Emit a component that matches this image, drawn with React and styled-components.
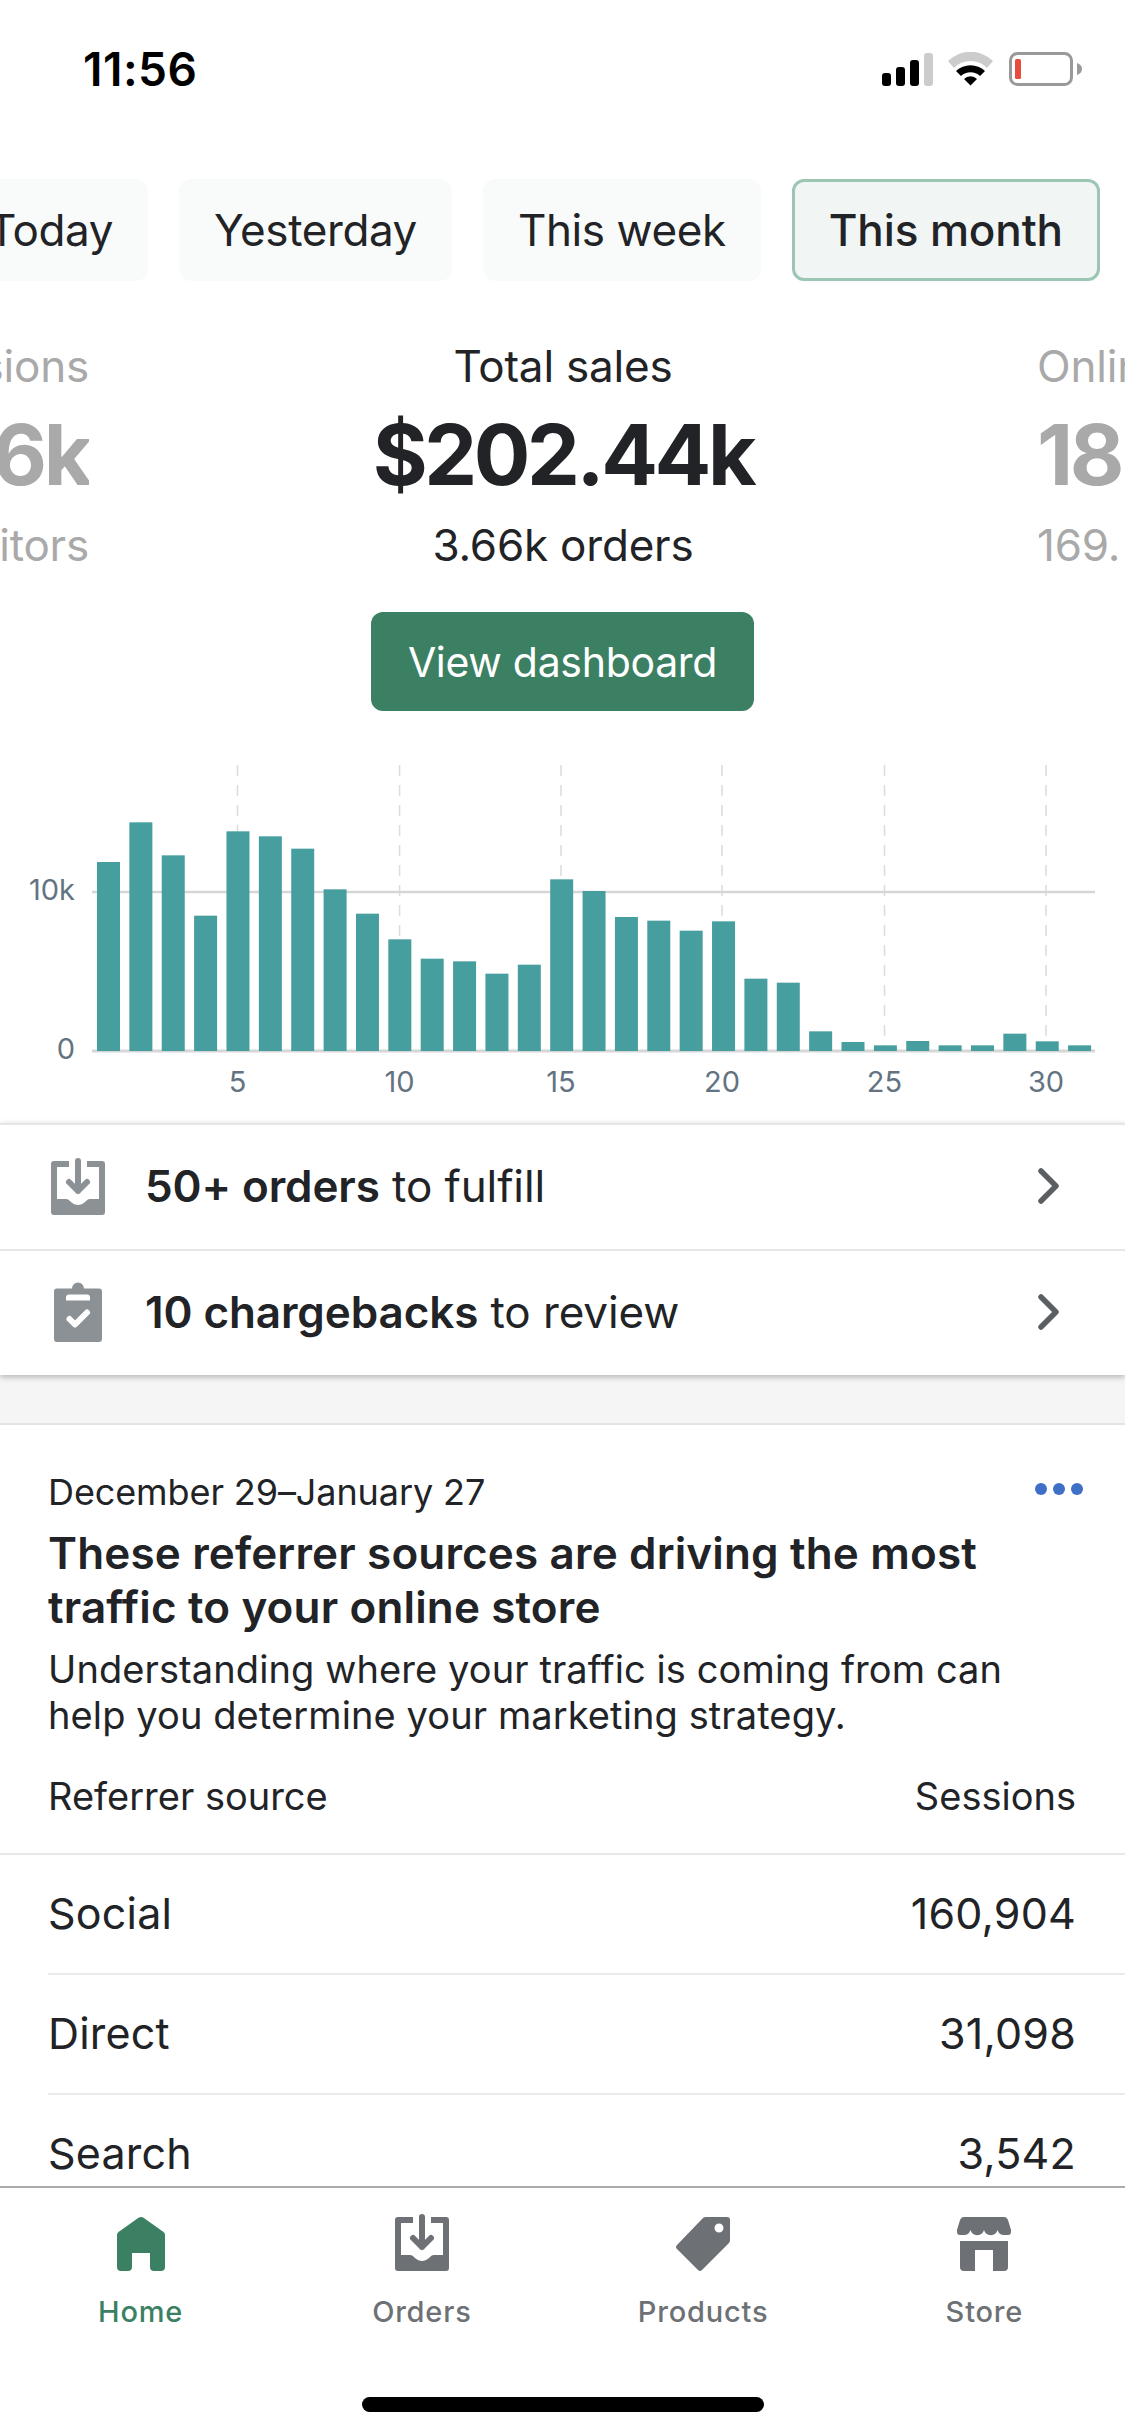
import React from "react";
import styled, { createGlobalStyle } from "styled-components";

const Global = createGlobalStyle`
  html, body { margin: 0; padding: 0; background: #fff; }
  * { box-sizing: border-box; }
`;

const Phone = styled.div`
  width: 1125px; height: 2436px; display: flex; flex-direction: column; overflow: hidden;
  background: #fff; color: #212326; font-family: Inter, "Noto Sans", sans-serif;
`;
const Main = styled.main`flex: 1; min-height: 0; overflow: hidden;`;
const StatusBar = styled.div`
  height: 138px; display: flex; align-items: center; justify-content: space-between;
  padding: 0 43px 0 83px;
`;
const Time = styled.div`font-size: 46px; font-weight: 600; color: #000; letter-spacing: 0.5px;`;
const StatusIcons = styled.div`display: flex; align-items: center;`;
const PillRow = styled.div`
  margin-top: 41px; display: flex; justify-content: flex-end; gap: 31px; padding-right: 25px; overflow: hidden;
`;
const Pill = styled.div`
  flex: none; height: 102px; padding: 0 ${p => (p.$active ? 34 : 35)}px; display: flex; align-items: center; border-radius: 12px;
  font-size: 44px; letter-spacing: ${p => (p.$active ? "-0.1px" : "-0.4px")}; color: #212326;
  background: ${p => (p.$active ? "#f1f5f4" : "#f9fbfa")};
  border: ${p => (p.$active ? "3px solid #9cc6b3" : "none")};
  font-weight: ${p => (p.$active ? 500 : 400)};
`;
const Metrics = styled.div`margin-top: 57px; display: flex; overflow: hidden;`;
const SideMetric = styled.div`
  flex: none; width: ${p => p.$w}px; overflow: hidden; white-space: nowrap; color: #a9a9a9;
  display: flex; flex-direction: column; align-items: ${p => (p.$left ? "flex-end" : "flex-start")};
`;
const CenterMetric = styled.div`flex: 1; display: flex; flex-direction: column; align-items: center; white-space: nowrap;`;
const Label = styled.div`font-size: 44px; line-height: 56px; letter-spacing: -0.2px;`;
const Value = styled.div`font-size: 84px; line-height: 122px; font-weight: 700; letter-spacing: -3.4px;`;
const Sub = styled.div`font-size: 44px; line-height: 58px; letter-spacing: -0.2px;`;
const ButtonWrap = styled.div`margin-top: 38px; display: flex; justify-content: center;`;
const Button = styled.div`
  width: 383px; height: 99px; border-radius: 12px; background: #3b8062; color: #fff;
  display: flex; align-items: center; justify-content: center; font-size: 41px; letter-spacing: -0.3px;
`;
const ChartSvg = styled.svg`display: block; margin-top: 54px;`;
const Rows = styled.div`box-shadow: 0 2px 6px rgba(0,0,0,.28); position: relative;`;
const TaskRow = styled.div`
  height: 126px; border-top: 2px solid #e6e6e6; display: flex; align-items: center;
  padding: 0 66px 2px 51px; font-size: 44px; letter-spacing: -0.1px;
`;
const TaskIcon = styled.div`width: 54px; display: flex; justify-content: center; margin-right: 40px;`;
const TaskText = styled.div`flex: 1; b { font-weight: 600; }`;
const Gap = styled.div`height: 50px; background: #f5f5f5; border-bottom: 2px solid #e4e4e4;`;
const Card = styled.section`padding-top: 44px;`;
const CardTop = styled.div`display: flex; justify-content: space-between; align-items: flex-start; padding: 0 42px 0 48px;`;
const DateLine = styled.div`font-size: 36px; line-height: 46px; letter-spacing: -0.1px;`;
const Dots = styled.div`display: flex; gap: 6px; margin-top: 14px;`;
const Dot = styled.span`width: 12px; height: 12px; border-radius: 50%; background: #3f6fc7;`;
const Heading = styled.h2`
  margin: 11px 0 0; padding: 0 48px; font-size: 44px; line-height: 54px; font-weight: 600; letter-spacing: 0.15px; width: 1060px;
`;
const Desc = styled.p`margin: 13px 0 0; padding: 0 48px; font-size: 38px; line-height: 45.5px; letter-spacing: 0.1px; width: 1075px;`;
const TableHead = styled.div`
  margin-top: 35px; padding: 0 49px 34px 48px; display: flex; justify-content: space-between;
  font-size: 38px; line-height: 46px; border-bottom: 2px solid #e8e8e8;
`;
const TableRow = styled.div`
  margin-left: 48px; height: 120px; padding: 0 49px 2px 0; display: flex; align-items: center; justify-content: space-between;
  font-size: 43px; letter-spacing: 0.2px; border-bottom: 2px solid #ebebeb;
`;
const Nav = styled.nav`flex: none; height: 250px; border-top: 2px solid #aaa; background: #fff; display: flex; flex-direction: column;`;
const NavGrid = styled.div`display: grid; grid-template-columns: repeat(4, 1fr); padding-top: 29px;`;
const NavItem = styled.div`
  display: flex; flex-direction: column; align-items: center;
  color: ${p => (p.$active ? "#3b8062" : "#6d7175")};
`;
const NavIconBox = styled.div`height: 54px; display: flex; align-items: flex-end;`;
const NavLabel = styled.div`margin-top: 21px; font-size: 29px; line-height: 40px; font-weight: 500; letter-spacing: 0.8px;`;
const HomeBar = styled.div`margin: 65px auto 0; width: 402px; height: 15px; border-radius: 8px; background: #000;`;

const Signal = () => (
  <svg width="51" height="33" viewBox="0 0 51 33" style={{ marginRight: 15 }}>
    <rect x="0" y="20" width="9" height="13" rx="3" fill="#000" />
    <rect x="14" y="14" width="9" height="19" rx="3" fill="#000" />
    <rect x="28" y="7" width="9" height="26" rx="3" fill="#000" />
    <rect x="42" y="0" width="9" height="33" rx="3" fill="#ccc" />
  </svg>
);
const Wifi = () => (
  <svg width="45" height="34" viewBox="0 0 45 34" style={{ marginRight: 16 }}>
    <path d="M0 9A32 32 0 0 1 45 9L39 16A23 23 0 0 0 6 16Z" fill="#ccc" />
    <path d="M8 19A21 21 0 0 1 37 19L32 24A14 14 0 0 0 13 24Z" fill="#000" />
    <path d="M16 27A9 9 0 0 1 29 27L22.5 33.5Z" fill="#000" />
  </svg>
);
const Battery = () => (
  <svg width="73" height="34" viewBox="0 0 73 34">
    <rect x="1.5" y="1.5" width="61" height="31" rx="7" fill="none" stroke="#999" strokeWidth="3" />
    <rect x="6" y="7" width="6" height="20" rx="1.5" fill="#e74c3c" />
    <path d="M68 11C71 12 73 14 73 17C73 20 71 22 68 23Z" fill="#999" />
  </svg>
);

const OrdersIcon = ({ color = "currentColor" }) => (
  <svg width="54" height="57" viewBox="0 0 54 57" style={{ overflow: "visible", display: "block" }}>
    <path fill={color} d="M3 3H18V9H6V41H15C17 41 18 42 20 44C22 46 25 47 27 47C29 47 32 46 34 44C36 42 37 41 39 41H48V9H36V3H51A3 3 0 0 1 54 6V54A3 3 0 0 1 51 57H3A3 3 0 0 1 0 54V6A3 3 0 0 1 3 3Z" />
    <path d="M27 3V33M18 24L27 33L36 24" fill="none" stroke={color} strokeWidth="6" strokeLinecap="round" strokeLinejoin="round" />
  </svg>
);
const ClipboardIcon = () => (
  <svg width="48" height="60" viewBox="0 0 48 60" style={{ display: "block" }}>
    <path fillRule="evenodd" fill="#8c9196" d="M18 6.5A6 6 0 0 1 30 6.5H45A3 3 0 0 1 48 9.5V57A3 3 0 0 1 45 60H3A3 3 0 0 1 0 57V9.5A3 3 0 0 1 3 6.5ZM15 12.5A3 3 0 0 0 12 15.5V18.5H36V15.5A3 3 0 0 0 33 12.5Z" />
    <path d="M15.5 37L21 42.5L33 30.5" fill="none" stroke="#fff" strokeWidth="6" strokeLinecap="round" strokeLinejoin="round" />
  </svg>
);
const HomeIcon = () => (
  <svg width="48" height="54" viewBox="0 0 48 54" style={{ display: "block" }}>
    <path fill="currentColor" d="M21.5 .7Q24 -.5 26.5 .7L46.5 15Q48 16 48 18V50A4 4 0 0 1 44 54H37A4 4 0 0 1 33 50V36H15V50A4 4 0 0 1 11 54H4A4 4 0 0 1 0 50V18Q0 16 1.5 15Z" />
  </svg>
);
const TagIcon = () => (
  <svg width="54" height="54" viewBox="0 0 54 54" style={{ display: "block" }}>
    <path fillRule="evenodd" fill="currentColor" d="M27 1Q28 0 30 0H51A3 3 0 0 1 54 3V23Q54 25 53 26L26 53Q24 55 22 53L1 32Q-1 30 1 28ZM43 6.5A4.5 4.5 0 1 0 43 15.5A4.5 4.5 0 1 0 43 6.5Z" />
  </svg>
);
const StoreIcon = () => (
  <svg width="54" height="54" viewBox="0 0 54 54" style={{ display: "block" }}>
    <path fill="currentColor" d="M7 0H47C49 0 50 1 51 3L54 13V15A3 3 0 0 1 51 18H47A7 7 0 0 1 40.5 13A7 7 0 0 1 27 13A7 7 0 0 1 13.5 13A7 7 0 0 1 7 18H3A3 3 0 0 1 0 15V13L3 3C4 1 5 0 7 0Z" />
    <path fill="currentColor" d="M3 24H51V50A4 4 0 0 1 47 54H36V33H18V54H7A4 4 0 0 1 3 50Z" />
  </svg>
);
const Chevron = () => (
  <svg width="21" height="36" viewBox="0 0 21 36">
    <path d="M3 3L18 18L3 33" fill="none" stroke="#5c5f62" strokeWidth="5.5" strokeLinecap="round" strokeLinejoin="round" />
  </svg>
);

const tops = [365,246,345,526,273,288,325,447,520,597,655,663,700,673,417,452,530,541,571,543,715,727,873,905,915,902,915,915,880,903,915];
const BASE = 286;
const Chart = () => (
  <ChartSvg width="1125" height="358" viewBox="0 0 1125 358" fontFamily="Inter, sans-serif" fontSize="29" fill="#637381">
    {[237.5, 399.6, 561, 722, 884.5, 1046].map(x => (
      <line key={x} x1={x} x2={x} y1="0" y2={BASE} stroke="#dcdcdc" strokeWidth="1.5" strokeDasharray="11 9" />
    ))}
    <line x1="92" x2="1095" y1="127" y2="127" stroke="#d6d6d8" strokeWidth="2.5" />
    <line x1="92" x2="1095" y1={BASE} y2={BASE} stroke="#d6d6d8" strokeWidth="3" />
    {tops.map((t, i) => {
      const h = (932 - t) / 3;
      return <rect key={i} x={97 + i * 32.37} y={BASE - h} width="23" height={h} fill="#479e9f" />;
    })}
    <text x="75" y="135" textAnchor="end">10k</text>
    <text x="75" y="294" textAnchor="end">0</text>
    {[[5, 237.5], [10, 399.6], [15, 561], [20, 722], [25, 884.5], [30, 1046]].map(([d, x]) => (
      <text key={d} x={x} y="327" textAnchor="middle">{d}</text>
    ))}
  </ChartSvg>
);

export default function App() {
  return (
    <Phone>
      <Global />
      <Main>
        <StatusBar>
          <Time>11:56</Time>
          <StatusIcons><Signal /><Wifi /><Battery /></StatusIcons>
        </StatusBar>
        <PillRow>
          <Pill>Today</Pill>
          <Pill>Yesterday</Pill>
          <Pill>This week</Pill>
          <Pill $active>This month</Pill>
        </PillRow>
        <Metrics>
          <SideMetric $w={89} $left>
            <Label>Sessions</Label>
            <Value>6k</Value>
            <Sub>visitors</Sub>
          </SideMetric>
          <CenterMetric>
            <Label>Total sales</Label>
            <Value>$202.44k</Value>
            <Sub>3.66k orders</Sub>
          </CenterMetric>
          <SideMetric $w={88}>
            <Label>Online store</Label>
            <Value>18</Value>
            <Sub>169.</Sub>
          </SideMetric>
        </Metrics>
        <ButtonWrap><Button>View dashboard</Button></ButtonWrap>
        <Chart />
        <Rows>
          <TaskRow>
            <TaskIcon><OrdersIcon color="#8c9196" /></TaskIcon>
            <TaskText><b>50+ orders</b> to fulfill</TaskText>
            <Chevron />
          </TaskRow>
          <TaskRow>
            <TaskIcon><ClipboardIcon /></TaskIcon>
            <TaskText><b>10 chargebacks</b> to review</TaskText>
            <Chevron />
          </TaskRow>
        </Rows>
        <Gap />
        <Card>
          <CardTop>
            <DateLine>December 29–January 27</DateLine>
            <Dots><Dot /><Dot /><Dot /></Dots>
          </CardTop>
          <Heading>These referrer sources are driving the most traffic to your online store</Heading>
          <Desc>Understanding where your traffic is coming from can help you determine your marketing strategy.</Desc>
          <TableHead><span>Referrer source</span><span>Sessions</span></TableHead>
          <TableRow><span>Social</span><span>160,904</span></TableRow>
          <TableRow><span>Direct</span><span>31,098</span></TableRow>
          <TableRow><span>Search</span><span>3,542</span></TableRow>
        </Card>
      </Main>
      <Nav>
        <NavGrid>
          <NavItem $active><NavIconBox><HomeIcon /></NavIconBox><NavLabel>Home</NavLabel></NavItem>
          <NavItem><NavIconBox><OrdersIcon /></NavIconBox><NavLabel>Orders</NavLabel></NavItem>
          <NavItem><NavIconBox><TagIcon /></NavIconBox><NavLabel>Products</NavLabel></NavItem>
          <NavItem><NavIconBox><StoreIcon /></NavIconBox><NavLabel>Store</NavLabel></NavItem>
        </NavGrid>
        <HomeBar />
      </Nav>
    </Phone>
  );
}
